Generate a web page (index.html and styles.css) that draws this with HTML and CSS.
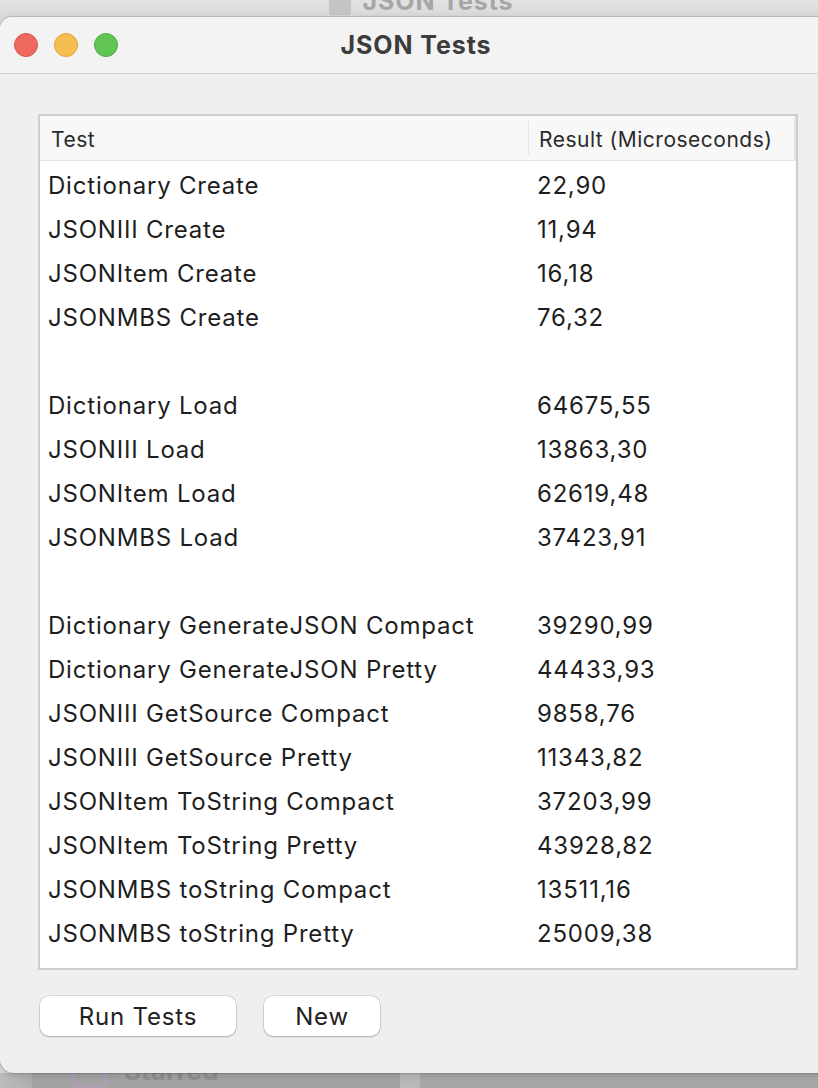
FILE: index.html
```html
<!DOCTYPE html>
<html>
<head>
<meta charset="utf-8">
<link rel="stylesheet" href="styles.css">
</head>
<body>
<div class="screen">
  <div class="behind-top">
    <div class="ghost-title"><span class="ghost-icon"></span><span>JSON Tests</span></div>
  </div>
  <div class="window">
    <div class="titlebar">
      <div class="lights">
        <span class="light red"></span>
        <span class="light yellow"></span>
        <span class="light green"></span>
      </div>
      <div class="title">JSON Tests</div>
    </div>
    <div class="content">
      <div class="table">
        <div class="thead">
          <div class="th th-test">Test</div>
          <div class="th th-result">Result (Microseconds)</div>
        </div>
        <div class="tbody">
          <div class="row"><span class="c1">Dictionary Create</span><span class="c2">22,90</span></div>
          <div class="row"><span class="c1">JSONIII Create</span><span class="c2">11,94</span></div>
          <div class="row"><span class="c1">JSONItem Create</span><span class="c2">16,18</span></div>
          <div class="row"><span class="c1">JSONMBS Create</span><span class="c2">76,32</span></div>
          <div class="row"><span class="c1"></span><span class="c2"></span></div>
          <div class="row"><span class="c1">Dictionary Load</span><span class="c2">64675,55</span></div>
          <div class="row"><span class="c1">JSONIII Load</span><span class="c2">13863,30</span></div>
          <div class="row"><span class="c1">JSONItem Load</span><span class="c2">62619,48</span></div>
          <div class="row"><span class="c1">JSONMBS Load</span><span class="c2">37423,91</span></div>
          <div class="row"><span class="c1"></span><span class="c2"></span></div>
          <div class="row"><span class="c1">Dictionary GenerateJSON Compact</span><span class="c2">39290,99</span></div>
          <div class="row"><span class="c1">Dictionary GenerateJSON Pretty</span><span class="c2">44433,93</span></div>
          <div class="row"><span class="c1">JSONIII GetSource Compact</span><span class="c2">9858,76</span></div>
          <div class="row"><span class="c1">JSONIII GetSource Pretty</span><span class="c2">11343,82</span></div>
          <div class="row"><span class="c1">JSONItem ToString Compact</span><span class="c2">37203,99</span></div>
          <div class="row"><span class="c1">JSONItem ToString Pretty</span><span class="c2">43928,82</span></div>
          <div class="row"><span class="c1">JSONMBS toString Compact</span><span class="c2">13511,16</span></div>
          <div class="row"><span class="c1">JSONMBS toString Pretty</span><span class="c2">25009,38</span></div>
        </div>
      </div>
      <div class="buttons">
        <button class="btn btn-run">Run Tests</button>
        <button class="btn btn-new">New</button>
      </div>
    </div>
  </div>
  <div class="behind-bottom">
    <div class="side-edge"></div>
    <div class="sidebar"><span class="star-icon"></span><span class="star-text">Starred</span></div>
    <div class="divider"></div>
    <div class="rest"></div>
  </div>
</div>
</body>
</html>
```
FILE: styles.css
```css
html, body {
  margin: 0;
  padding: 0;
}
body {
  width: 818px;
  height: 1088px;
  overflow: hidden;
  background: #dadada;
  font-family: Inter, "Liberation Sans", Arial, sans-serif;
  color: #222;
}
.screen {
  width: 818px;
  height: 1088px;
  display: flex;
  flex-direction: column;
  overflow: hidden;
}
.behind-top {
  height: 17px;
  flex: none;
  background: linear-gradient(#e2e2e2, #d9d9d9);
  overflow: hidden;
}
.ghost-title {
  display: flex;
  align-items: flex-end;
  gap: 12px;
  justify-content: center;
  margin-left: 24px;
  margin-top: -13px;
  color: #a6a6a6;
  font-weight: 700;
  font-size: 25px;
  letter-spacing: 0.9px;
  line-height: 28px;
}
.ghost-icon {
  width: 22px;
  height: 22px;
  background: #c4c4c4;
  border-radius: 2px;
}
.window {
  flex: none;
  width: 840px;
  height: 1056px;
  background: #efefef;
  border-radius: 12px 12px 0 14px;
  box-shadow: 0 0 0 1px rgba(0,0,0,0.12), 0 2px 8px rgba(0,0,0,0.15);
  display: flex;
  flex-direction: column;
  position: relative;
  z-index: 2;
}
.titlebar {
  height: 56px;
  flex: none;
  background: #f3f3f3;
  border-bottom: 1px solid #d3d3d3;
  border-radius: 12px 12px 0 0;
  display: flex;
  align-items: center;
  position: relative;
}
.lights {
  display: flex;
  gap: 16px;
  padding-left: 14px;
}
.light {
  width: 24px;
  height: 24px;
  border-radius: 50%;
  box-sizing: border-box;
}
.red { background: #ee6a5e; border: 1px solid #d8574c; }
.yellow { background: #f6be50; border: 1px solid #dea43c; }
.green { background: #61c554; border: 1px solid #4ea842; }
.title {
  position: absolute;
  left: 0;
  width: 832px;
  text-align: center;
  font-weight: 700;
  font-size: 25px;
  letter-spacing: 0.9px;
  color: #3c3c3c;
}
.content {
  padding: 40px 0 0 38px;
  display: flex;
  flex-direction: column;
}
.table {
  width: 756px;
  height: 852px;
  background: #fff;
  border: 2px solid #cdcdcd;
  display: flex;
  flex-direction: column;
}
.thead {
  height: 44px;
  flex: none;
  display: flex;
  background: #f8f8f8;
  border-bottom: 1px solid #e4e4e4;
  border-right: 2px solid #e3e3e3;
  font-size: 21px;
  letter-spacing: 0.5px;
  color: #2a2a2a;
}
.th {
  display: flex;
  align-items: center;
  padding-top: 2px;
}
.th-test {
  width: 477px;
  padding-left: 11px;
  border-right: 1px solid #e6e6e6;
  margin: 5px 0;
}
.th-result {
  padding-left: 10px;
}
.tbody {
  display: flex;
  flex-direction: column;
  padding-top: 2px;
}
.row {
  height: 44px;
  display: flex;
  align-items: center;
  font-size: 24px;
  letter-spacing: 0.8px;
  color: #1e1e1e;
}
.c1 {
  width: 489px;
  padding-left: 8px;
}
.buttons {
  display: flex;
  gap: 28px;
  margin-top: 26px;
  padding-left: 2px;
}
.btn {
  height: 40px;
  background: #fff;
  border: none;
  border-radius: 9px;
  box-shadow: 0 0 0 0.5px rgba(0,0,0,0.18), 0 1px 2px rgba(0,0,0,0.2);
  font-family: Inter, "Liberation Sans", Arial, sans-serif;
  font-size: 24px;
  letter-spacing: 0.8px;
  color: #222;
  padding: 0;
}
.btn-run { width: 196px; }
.btn-new { width: 116px; }
.behind-bottom {
  flex: 1;
  display: flex;
  background: linear-gradient(#9c9c9c, #a9a9a9);
  overflow: hidden;
}
.side-edge {
  width: 32px;
  background: linear-gradient(90deg, #bdbdbd, #aeaeae);
}
.sidebar {
  width: 368px;
  box-sizing: border-box;
  background: #a3a3a3;
  display: flex;
  gap: 18px;
  padding-left: 40px;
}
.star-icon {
  width: 30px;
  height: 22px;
  border: 2px solid #b49bbd;
  border-radius: 3px;
  margin-top: -12px;
}
.star-text {
  font-size: 26px;
  font-weight: 700;
  color: #8f8f8f;
  margin-top: -18px;
}
.divider {
  width: 20px;
  background: #b8b8b8;
}
.rest {
  flex: 1;
  background: #a7a7a7;
}
```
